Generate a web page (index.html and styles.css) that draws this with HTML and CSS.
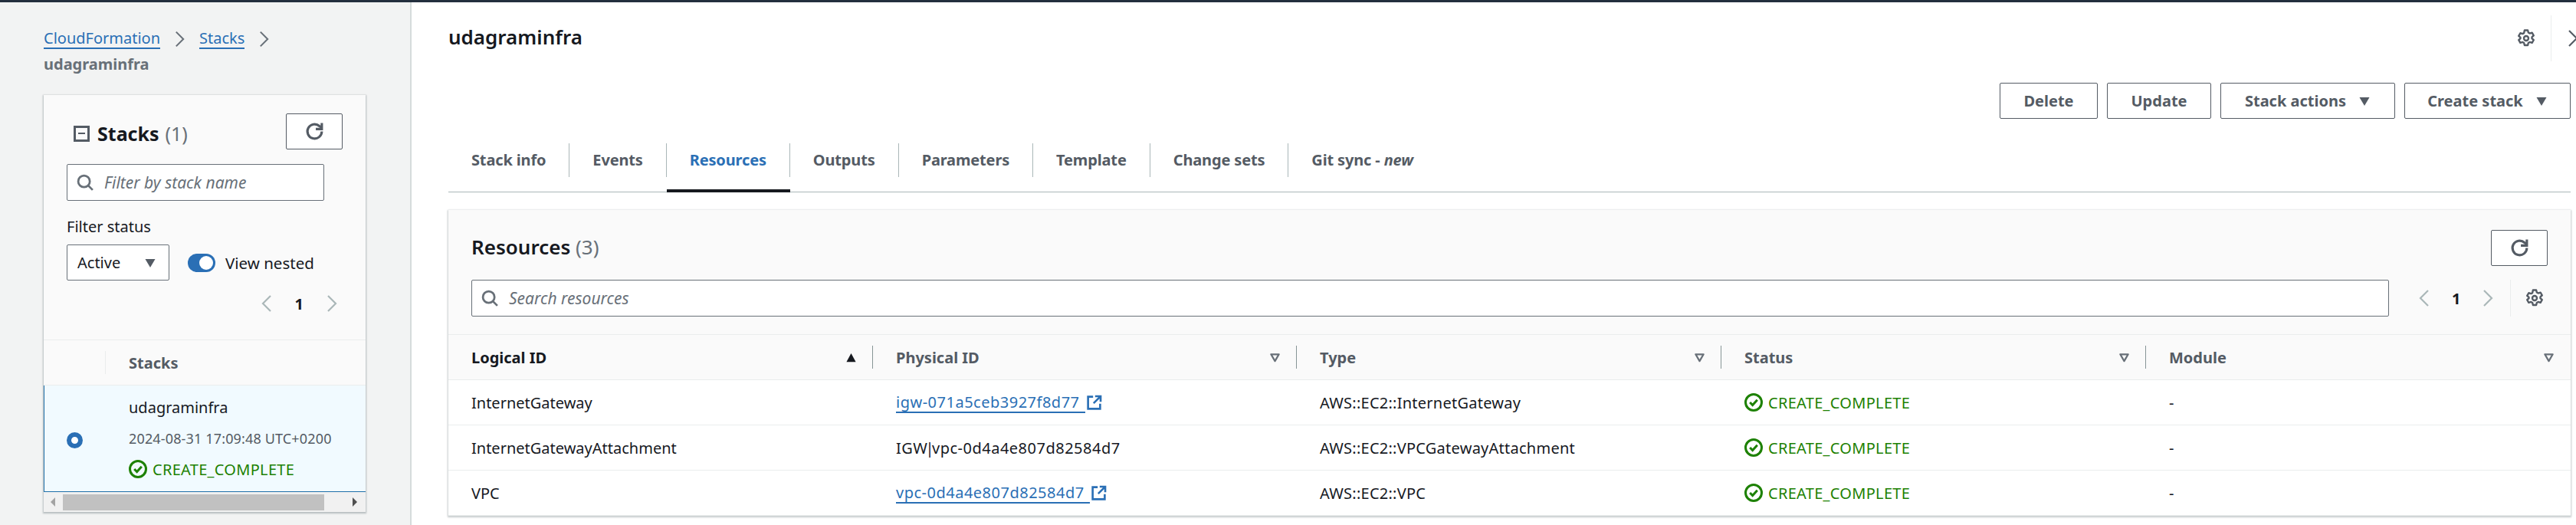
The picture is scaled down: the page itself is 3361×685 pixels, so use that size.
FILE: index.html
```html
<!DOCTYPE html>
<html lang="en">
<head>
  <meta charset="UTF-8">
  <title>udagraminfra - CloudFormation</title>
  <link rel="stylesheet" href="styles.css">
</head>
<body>
<svg class="defs" width="0" height="0">
  <symbol id="refresh" viewBox="0 0 16 16"><path d="M14 8a6 6 0 1 1-2-4.5L14 5" fill="none" stroke="currentColor" stroke-width="2"/><path d="M14 1v5H9" fill="none" stroke="currentColor" stroke-width="2" stroke-linejoin="miter"/></symbol>
  <symbol id="search" viewBox="0 0 16 16"><circle cx="7" cy="7" r="5.5" fill="none" stroke="currentColor" stroke-width="2"/><path d="M11 11l4.2 4.2" fill="none" stroke="currentColor" stroke-width="2"/></symbol>
  <symbol id="gear" viewBox="0 0 16 16"><path d="M6.6 1h2.8l.5 2 1.2.7 2-.6 1.4 2.4-1.5 1.4v1.2l1.5 1.4-1.4 2.4-2-.6-1.2.7-.5 2H6.600l-.5-2-1.200-.7-2 .6-1.400-2.400 1.500-1.400V7.300L1.500 5.900l1.400-2.400 2 .6 1.200-.7z" fill="none" stroke="currentColor" stroke-width="1.600" stroke-linejoin="round"/><circle cx="8" cy="8" r="2" fill="none" stroke="currentColor" stroke-width="1.600"/></symbol>
  <symbol id="check" viewBox="0 0 16 16"><circle cx="8" cy="8" r="7" fill="none" stroke="currentColor" stroke-width="2"/><path d="M4.800 8l2.300 2.400 4.100-4.600" fill="none" stroke="currentColor" stroke-width="2"/></symbol>
  <symbol id="external" viewBox="0 0 16 16"><path d="M7 2H2v12h12V9" fill="none" stroke="currentColor" stroke-width="2"/><path d="M9 1.500h5.500V7M14 2L7.500 8.500" fill="none" stroke="currentColor" stroke-width="2"/></symbol>
  <symbol id="caret" viewBox="0 0 16 16"><path d="M1.500 3h13L8 14z" fill="currentColor"/></symbol>
  <symbol id="caret-up" viewBox="0 0 16 16"><path d="M1.500 14h13L8 2z" fill="currentColor"/></symbol>
  <symbol id="filter" viewBox="0 0 16 16"><path d="M2.500 3.500h11L8 13z" fill="none" stroke="currentColor" stroke-width="2.400" stroke-linejoin="round"/></symbol>
  <symbol id="left" viewBox="0 0 16 24"><path d="M13 2L3 12l10 10" fill="none" stroke="currentColor" stroke-width="2.200"/></symbol>
  <symbol id="right" viewBox="0 0 16 24"><path d="M3 2l10 10L3 22" fill="none" stroke="currentColor" stroke-width="2.200"/></symbol>
</svg>

<div class="page">
  <aside class="sidebar">
    <nav class="crumbs">
      <div class="crumb-line">
        <a class="link">CloudFormation</a>
        <svg class="crumb-sep"><use href="#right"/></svg>
        <a class="link">Stacks</a>
        <svg class="crumb-sep"><use href="#right"/></svg>
      </div>
      <div class="crumb-current">udagraminfra</div>
    </nav>

    <section class="stack-card">
      <div class="stack-top">
        <div class="stack-head">
          <h2 class="stack-title">
            <span class="collapse"><span class="collapse-bar"></span></span>
            Stacks <span class="count">(1)</span>
          </h2>
          <button class="btn btn-icon"><svg class="icon-refresh"><use href="#refresh"/></svg></button>
        </div>
        <div class="search stack-search">
          <svg class="search-icon"><use href="#search"/></svg>
          <span class="placeholder">Filter by stack name</span>
        </div>
        <div class="filter-label">Filter status</div>
        <div class="filter-row">
          <div class="select">Active <svg class="caret"><use href="#caret"/></svg></div>
          <span class="toggle"><span class="toggle-knob"></span></span>
          <span class="toggle-label">View nested</span>
        </div>
        <div class="pager stack-pager">
          <svg class="pager-arrow"><use href="#left"/></svg>
          <b class="pager-num">1</b>
          <svg class="pager-arrow"><use href="#right"/></svg>
        </div>
      </div>
      <div class="stack-table-head">
        <span class="stack-sep"></span>
        <span class="stack-col">Stacks</span>
      </div>
      <div class="stack-row">
        <span class="radio-cell"><span class="radio"></span></span>
        <div class="stack-info">
          <div class="stack-name">udagraminfra</div>
          <div class="stack-date">2024-08-31 17:09:48 UTC+0200</div>
          <div class="status"><svg class="status-icon"><use href="#check"/></svg>CREATE_COMPLETE</div>
        </div>
      </div>
      <div class="scrollbar">
        <span class="scroll-left"></span>
        <span class="scroll-thumb"></span>
        <span class="scroll-right"></span>
      </div>
    </section>
  </aside>

  <main class="main">
    <div class="title-row">
      <h1 class="page-title">udagraminfra</h1>
      <svg class="gear top-gear"><use href="#gear"/></svg>
      <span class="title-sep"></span>
      <svg class="top-chevron"><use href="#right"/></svg>
    </div>

    <div class="actions">
      <button class="btn btn-delete">Delete</button>
      <button class="btn btn-update">Update</button>
      <button class="btn btn-stack">Stack actions <svg class="caret"><use href="#caret"/></svg></button>
      <button class="btn btn-create">Create stack <svg class="caret"><use href="#caret"/></svg></button>
    </div>

    <div class="tabs">
      <div class="tab"><span class="tab-label">Stack info</span></div>
      <div class="tab"><span class="tab-label">Events</span></div>
      <div class="tab active"><span class="tab-label">Resources</span></div>
      <div class="tab"><span class="tab-label">Outputs</span></div>
      <div class="tab"><span class="tab-label">Parameters</span></div>
      <div class="tab"><span class="tab-label">Template</span></div>
      <div class="tab"><span class="tab-label">Change sets</span></div>
      <div class="tab"><span class="tab-label last">Git sync - <i>new</i></span></div>
    </div>

    <section class="res-card">
      <div class="res-top">
        <div class="res-head">
          <h2 class="res-title">Resources <span class="count">(3)</span></h2>
          <button class="btn btn-icon"><svg class="icon-refresh"><use href="#refresh"/></svg></button>
        </div>
        <div class="res-tools">
          <div class="search res-search">
            <svg class="search-icon"><use href="#search"/></svg>
            <span class="placeholder">Search resources</span>
          </div>
          <div class="pager res-pager">
            <svg class="pager-arrow"><use href="#left"/></svg>
            <span class="pager-num">1</span>
            <svg class="pager-arrow"><use href="#right"/></svg>
          </div>
          <div class="res-settings"><svg class="gear"><use href="#gear"/></svg></div>
        </div>
      </div>

      <div class="grid grid-head">
        <div class="th sorted">Logical ID <svg class="th-icon"><use href="#caret-up"/></svg><span class="th-sep"></span></div>
        <div class="th">Physical ID <svg class="th-icon"><use href="#filter"/></svg><span class="th-sep"></span></div>
        <div class="th">Type <svg class="th-icon"><use href="#filter"/></svg><span class="th-sep"></span></div>
        <div class="th">Status <svg class="th-icon"><use href="#filter"/></svg><span class="th-sep"></span></div>
        <div class="th">Module <svg class="th-icon"><use href="#filter"/></svg></div>
      </div>
      <div class="grid grid-row">
        <div class="td">InternetGateway</div>
        <div class="td"><a class="link id-link">igw-071a5ceb3927f8d77</a><svg class="ext"><use href="#external"/></svg></div>
        <div class="td td-type">AWS::EC2::InternetGateway</div>
        <div class="td status"><svg class="status-icon"><use href="#check"/></svg>CREATE_COMPLETE</div>
        <div class="td">-</div>
      </div>
      <div class="grid grid-row">
        <div class="td">InternetGatewayAttachment</div>
        <div class="td id-text"><span>IGW<span class="pipe">|</span>vpc-0d4a4e807d82584d7</span></div>
        <div class="td td-type">AWS::EC2::VPCGatewayAttachment</div>
        <div class="td status"><svg class="status-icon"><use href="#check"/></svg>CREATE_COMPLETE</div>
        <div class="td">-</div>
      </div>
      <div class="grid grid-row">
        <div class="td">VPC</div>
        <div class="td"><a class="link id-link">vpc-0d4a4e807d82584d7</a><svg class="ext"><use href="#external"/></svg></div>
        <div class="td td-type">AWS::EC2::VPC</div>
        <div class="td status"><svg class="status-icon"><use href="#check"/></svg>CREATE_COMPLETE</div>
        <div class="td">-</div>
      </div>
    </section>
  </main>
</div>
</body>
</html>
```

FILE: styles.css
```css
html, body {
  margin: 0;
  padding: 0;
  background: #fff;
}
body {
  font-family: "Noto Sans", sans-serif;
  font-size: 20px;
  color: #16191f;
  height: 685px;
  overflow: hidden;
  border-top: 3px solid #232f3e;
  box-sizing: border-box;
}
.defs {
  display: block;
  height: 0;
}
h1, h2 {
  margin: 0;
}
.page {
  display: flex;
  height: 682px;
}
.link {
  color: #2a6fb5;
  border-bottom: 2px solid #2a6fb5;
  line-height: 25px;
}
.id-link {
  letter-spacing: 0.5px;
  padding-right: 7px;
}

/* left panel */
.sidebar {
  width: 537px;
  flex: none;
  box-sizing: border-box;
  background: #f2f3f3;
  border-right: 2px solid #d5dbdb;
  padding: 31px 0 0 57px;
}
.crumbs {
  height: 90px;
}
.crumb-line {
  display: flex;
  align-items: center;
  height: 33px;
}
.crumb-sep {
  width: 15px;
  height: 24px;
  margin: 0 18px;
  color: #687078;
}
.crumb-current {
  height: 33px;
  line-height: 33px;
  font-weight: 700;
  color: #687078;
}
.stack-card {
  width: 420px;
  background: #fafafa;
  box-shadow: 0 1px 2px 1px rgba(0, 28, 36, 0.25);
}
.stack-top {
  box-sizing: border-box;
  height: 320px;
  padding: 24px 30px 0;
  border-bottom: 1px solid #eaeded;
}
.stack-head {
  display: flex;
  justify-content: space-between;
  height: 47px;
  margin-bottom: 19px;
}
.stack-title {
  display: flex;
  align-items: center;
  gap: 8px;
  font-size: 25px;
  font-weight: 700;
  padding: 5px 0 0 9px;
}
.count {
  font-weight: 400;
  color: #687078;
}
.collapse {
  display: flex;
  align-items: center;
  justify-content: center;
  width: 21px;
  height: 21px;
  box-sizing: border-box;
  border: 3px solid #545b64;
  margin-right: 2px;
}
.collapse-bar {
  width: 9px;
  height: 2px;
  background: #545b64;
}
.btn {
  box-sizing: border-box;
  height: 47px;
  background: #fff;
  border: 1px solid #545b64;
  border-radius: 2px;
  font-family: inherit;
  font-size: 20px;
  font-weight: 700;
  color: #545b64;
  padding: 0;
}
.btn-icon {
  width: 74px;
  display: flex;
  align-items: center;
  justify-content: center;
}
.icon-refresh {
  width: 25px;
  height: 25px;
  color: #545b64;
}
.search {
  display: flex;
  align-items: center;
  box-sizing: border-box;
  height: 48px;
  background: #fff;
  border: 1px solid #687078;
  border-radius: 2px;
  padding-left: 12px;
}
.search-icon {
  width: 22px;
  height: 22px;
  color: #687078;
  margin-right: 14px;
}
.placeholder {
  font-style: italic;
  font-size: 21px;
  color: #687078;
}
.stack-search {
  width: 336px;
}
.filter-label {
  height: 57px;
  line-height: 68px;
}
.filter-row {
  display: flex;
  align-items: center;
  height: 47px;
}
.select {
  box-sizing: border-box;
  display: flex;
  align-items: center;
  justify-content: space-between;
  width: 134px;
  height: 47px;
  background: #fff;
  border: 1px solid #687078;
  border-radius: 2px;
  padding: 0 16px 0 13px;
}
.caret {
  width: 16px;
  height: 16px;
  color: #545b64;
}
.toggle {
  display: flex;
  justify-content: flex-end;
  align-items: center;
  width: 36px;
  height: 24px;
  box-sizing: border-box;
  background: #2a6fb5;
  border-radius: 12px;
  padding-right: 3px;
  margin: 0 13px 0 24px;
}
.toggle-knob {
  width: 18px;
  height: 18px;
  background: #fff;
  border-radius: 50%;
}
.toggle-label {
  font-size: 20.5px;
}
.pager {
  display: flex;
  align-items: center;
  gap: 29px;
}
.stack-pager {
  justify-content: flex-end;
  height: 60px;
  padding-right: 6px;
  color: #16191f;
}
.pager-arrow {
  width: 16px;
  height: 24px;
  color: #aab7b8;
}
.pager-num {
  font-weight: 700;
}
.stack-table-head {
  display: flex;
  align-items: center;
  height: 58px;
  border-bottom: 1px solid #eaeded;
}
.stack-sep {
  width: 1px;
  height: 30px;
  background: #eaeded;
  margin-left: 80px;
}
.stack-col {
  font-weight: 700;
  color: #545b64;
  margin-left: 30px;
}
.stack-row {
  display: flex;
  box-sizing: border-box;
  height: 139px;
  background: #f1faff;
  border-left: 1px solid #1f6fa8;
  border-bottom: 1px solid #1f6fa8;
}
.radio-cell {
  display: flex;
  align-items: center;
  justify-content: center;
  width: 78px;
  flex: none;
  margin-right: 32px;
  padding-top: 4px;
}
.radio {
  box-sizing: border-box;
  width: 21px;
  height: 21px;
  background: #fff;
  border: 6px solid #2a6fb5;
  border-radius: 50%;
}
.stack-info {
  padding-top: 9px;
}
.stack-name {
  height: 40px;
  line-height: 40px;
}
.stack-date {
  height: 40px;
  line-height: 40px;
  font-size: 18px;
  letter-spacing: 0.15px;
  color: #545b64;
  white-space: nowrap;
}
.status {
  display: flex;
  align-items: center;
  color: #1d8102;
  letter-spacing: 0.3px;
}
.stack-info .status {
  height: 40px;
}
.status-icon {
  width: 24px;
  height: 24px;
  margin-right: 7px;
  color: #1d8102;
}
.scrollbar {
  display: flex;
  align-items: center;
  height: 26px;
  background: #f1f1f1;
}
.scroll-left {
  width: 0;
  height: 0;
  border: 6px solid transparent;
  border-left: 0;
  border-right: 6px solid #a3a3a3;
  margin: 0 10px 0 9px;
}
.scroll-thumb {
  width: 341px;
  height: 21px;
  background: #c1c1c1;
  margin: 0 37px 0 0;
}
.scroll-right {
  width: 0;
  height: 0;
  border: 6px solid transparent;
  border-right: 0;
  border-left: 6px solid #505050;
}

/* main area */
.main {
  flex: 1;
  min-width: 0;
  padding: 0 7px 0 48px;
}
.title-row {
  display: flex;
  align-items: center;
  height: 94px;
  margin-right: -7px;
}
.page-title {
  font-size: 26px;
  font-weight: 600;
  flex: 1;
  margin-bottom: 4px;
}
.gear {
  width: 24px;
  height: 24px;
  color: #545b64;
}
.title-sep {
  width: 1px;
  height: 60px;
  background: #eaeded;
  margin: 0 20px;
}
.top-chevron {
  width: 16px;
  height: 24px;
  color: #545b64;
  flex: none;
  margin-right: -4px;
}
.actions {
  display: flex;
  justify-content: flex-end;
  gap: 12px;
  margin-top: 11px;
}
.actions .btn {
  display: flex;
  align-items: center;
  justify-content: center;
  gap: 16px;
}
.btn-delete { width: 128px; }
.btn-update { width: 136px; }
.btn-stack { width: 228px; }
.btn-create { width: 217px; }
.tabs {
  display: flex;
  height: 63px;
  margin-top: 32px;
  border-bottom: 1px solid #aab7b8;
}
.tab {
  height: 64px;
  box-sizing: border-box;
  border-bottom: 4px solid transparent;
}
.tab-label {
  display: block;
  box-sizing: border-box;
  height: 44px;
  line-height: 44px;
  padding: 0 30px;
  border-right: 1px solid #aab7b8;
  font-weight: 700;
  letter-spacing: -0.15px;
  color: #545b64;
}
.tab-label.last {
  border-right: 0;
}
.tab.active {
  border-bottom-color: #16191f;
}
.tab.active .tab-label {
  color: #2a6fb5;
}
.res-card {
  margin-top: 23px;
  box-shadow: 0 1px 2px 1px rgba(0, 28, 36, 0.22);
}
.res-top {
  box-sizing: border-box;
  height: 163px;
  background: #fafafa;
  padding: 26px 30px 0;
  border-bottom: 1px solid #eaeded;
}
.res-head {
  display: flex;
  justify-content: space-between;
  align-items: center;
  height: 47px;
  margin-bottom: 18px;
}
.res-title {
  font-size: 26px;
  font-weight: 600;
  margin-bottom: 4px;
}
.res-tools {
  display: flex;
  align-items: center;
  height: 48px;
}
.res-search {
  width: 2502px;
  flex: none;
}
.res-pager {
  margin-left: 38px;
  gap: 28px;
}
.res-settings {
  display: flex;
  align-items: center;
  height: 48px;
  margin-left: 21px;
  padding-left: 19px;
  border-left: 1px solid #eaeded;
}
.grid {
  display: grid;
  grid-template-columns: 554px 553px 554px 554px 1fr;
}
.grid-head {
  height: 58px;
  background: #fafafa;
  border-bottom: 1px solid #eaeded;
}
.th {
  display: flex;
  align-items: center;
  justify-content: space-between;
  box-sizing: border-box;
  padding: 0 21px 0 30px;
  position: relative;
  font-weight: 700;
  color: #545b64;
}
.th.sorted {
  color: #16191f;
}
.th-icon {
  width: 15px;
  height: 15px;
  color: #687078;
}
.sorted .th-icon {
  color: #16191f;
}
.th-sep {
  position: absolute;
  right: 0;
  top: 14px;
  width: 1px;
  height: 30px;
  background: #879596;
}
.grid-row {
  height: 59px;
  background: #fff;
  border-bottom: 1px solid #eaeded;
  box-sizing: border-box;
}
.td {
  display: flex;
  align-items: center;
  padding-left: 30px;
  white-space: nowrap;
}
.td-type {
  letter-spacing: 0.25px;
}
.id-text {
  letter-spacing: 0.5px;
}
.td.status {
  color: #1d8102;
}
.pipe {
  margin: 0 -3px;
}
.ext {
  width: 21px;
  height: 21px;
  color: #2a6fb5;
  margin-left: 1px;
}
```
